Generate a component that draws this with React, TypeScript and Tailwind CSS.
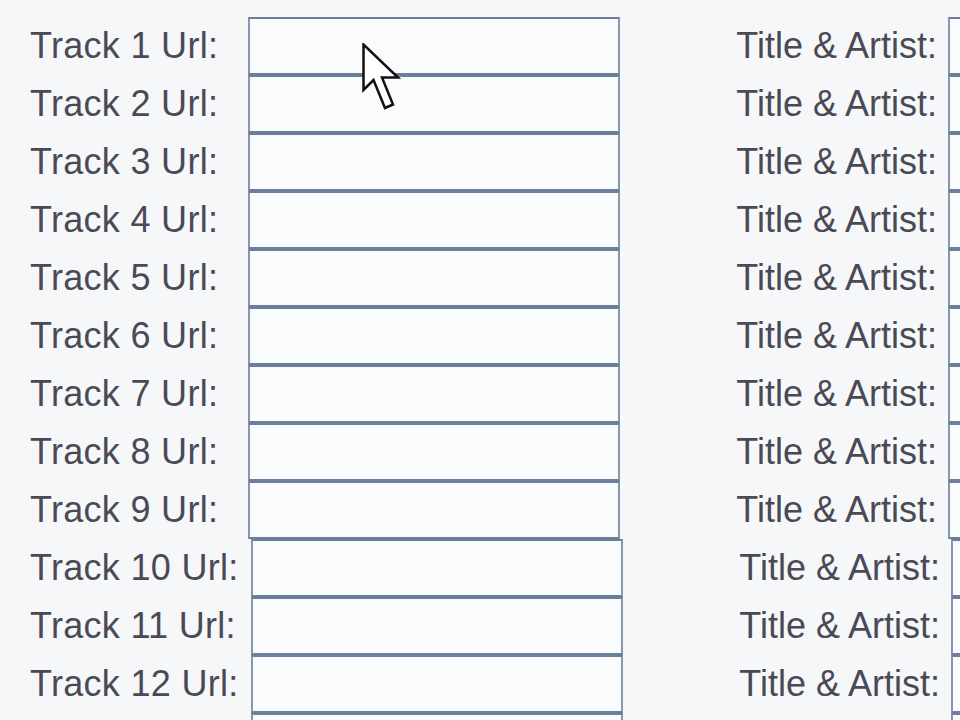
const tracks = Array.from({ length: 12 }, (_, i) => i + 1)

function Cursor() {
  return (
    <svg
      className="absolute left-[362px] top-[43px]"
      width="40"
      height="68"
      viewBox="0 0 40 68"
    >
      <path
        d="M1.5 1.5 L1.5 47 L11.5 37 L23 65 L31 61.5 L20 34.5 L36 34.5 Z"
        fill="#ffffff"
        stroke="#111111"
        strokeWidth="2.5"
        strokeLinejoin="miter"
      />
    </svg>
  )
}

const boxClass =
  'h-[58px] shrink-0 border-2 border-x-[#8597ad] border-y-[#6b7f9b] bg-[#f9fbfd] outline-none'

function TrackRow({ n, wide, bare }: { n: number; wide: boolean; bare?: boolean }) {
  return (
    <div className="flex h-[58px] items-center">
      <label className={`${wide ? 'w-[221px]' : 'w-[218px]'} shrink-0 whitespace-nowrap leading-none tracking-[0.3px]`}>
        {bare ? '' : `Track ${n} Url:`}
      </label>
      <input type="text" className={`${boxClass} w-[372px]`} />
      <label className="w-[328px] shrink-0 whitespace-nowrap pr-[11px] text-right leading-none">
        {bare ? '' : 'Title & Artist:'}
      </label>
      <input type="text" className={`${boxClass} w-[220px]`} />
    </div>
  )
}

export default function App() {
  return (
    <div
      className="relative h-[720px] w-[960px] overflow-hidden bg-[#f6f7f8] text-[36px] text-[#4a4a56]"
      style={{ fontFamily: '"Liberation Sans", Arial, sans-serif' }}
    >
      <form className="flex flex-col pl-[30px] pt-[17px]">
        {tracks.map(n => (
          <TrackRow key={n} n={n} wide={n >= 10} />
        ))}
        {/* next row only peeks in at the bottom edge */}
        <TrackRow n={13} wide bare />
      </form>
      <Cursor />
    </div>
  )
}
